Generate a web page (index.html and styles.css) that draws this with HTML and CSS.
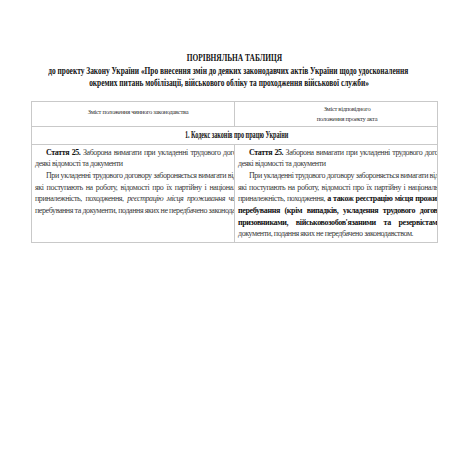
FILE: index.html
```html
<!DOCTYPE html>
<html lang="uk">
<head>
<meta charset="utf-8">
<link rel="stylesheet" href="styles.css">
</head>
<body>
<div class="page">
  <div class="title">
    <div class="tl1">ПОРІВНЯЛЬНА ТАБЛИЦЯ</div>
    <div class="tl2">до проекту Закону України «Про внесення змін до деяких законодавчих актів України щодо удосконалення</div>
    <div class="tl3">окремих питань мобілізації, військового обліку та проходження військової служби»</div>
  </div>
  <table class="cmp">
    <colgroup><col class="c1"><col class="c2"></colgroup>
    <tr class="head">
      <td><div class="hc hl">Зміст положення чинного законодавства</div></td>
      <td><div class="hc hr">Зміст відповідного<br>положення проекту акта</div></td>
    </tr>
    <tr class="sec">
      <td colspan="2"><div class="st"><span>1. Кодекс законів про працю України</span></div></td>
    </tr>
    <tr class="body">
      <td>
        <div class="txt">
          <div class="ln ind l1"><b>Стаття 25.</b> Заборона вимагати при укладенні трудового договору</div>
          <div class="ln">деякі відомості та документи</div>
          <div class="ln ind l3">При укладенні трудового договору забороняється вимагати від осіб,</div>
          <div class="ln l4">які поступають на роботу, відомості про їх партійну і національну</div>
          <div class="ln l5">приналежність, походження, <i>реєстрацію місця проживання чи</i></div>
          <div class="ln l6">перебування та документи, подання яких не передбачено законодавством.</div>
        </div>
      </td>
      <td>
        <div class="txt">
          <div class="ln ind r1"><b>Стаття 25.</b> Заборона вимагати при укладенні трудового договору</div>
          <div class="ln">деякі відомості та документи</div>
          <div class="ln ind r3">При укладенні трудового договору забороняється вимагати від осіб,</div>
          <div class="ln r4">які поступають на роботу, відомості про їх партійну і національну</div>
          <div class="ln r5">приналежність, походження, <b class="sp">а також реєстрацію місця проживання чи</b></div>
          <div class="ln r6"><b class="sp">перебування (крім випадків, укладення трудового договору з</b></div>
          <div class="ln r7"><b class="sp">призовниками, військовозобов'язаними та резервістами)</b> і</div>
          <div class="ln">документи, подання яких не передбачено законодавством.</div>
        </div>
      </td>
    </tr>
  </table>
</div>
</body>
</html>
```

FILE: styles.css
```css
html, body {
  margin: 0;
  padding: 0;
  background: #fff;
}
body {
  font-family: "Liberation Serif", "Times New Roman", serif;
  color: #222;
}
.page {
  padding-top: 52px;
}
.title {
  display: flex;
  flex-direction: column;
  align-items: center;
  font-weight: bold;
  font-size: 10px;
  line-height: 12.5px;
  color: #111;
}
.title > div {
  white-space: nowrap;
  transform: scaleX(0.74);
}
.tl1 { margin-left: 16px; transform: scaleX(0.72); }
.tl2 { margin-left: 4px; }
.tl3 { margin-left: 6px; }
.cmp {
  margin-top: 11px;
  margin-left: 31px;
  width: 406px;
  table-layout: fixed;
  border-collapse: collapse;
}
.cmp td {
  border: 1px solid #c9c9c9;
  padding: 0;
  overflow: hidden;
  vertical-align: top;
}
.c1 { width: 203px; }
.c2 { width: 203px; }
.head td {
  height: 24px;
  vertical-align: middle;
}
.hc {
  text-align: center;
  font-size: 6.5px;
  line-height: 10px;
  letter-spacing: -0.3px;
  color: #333;
}
.hl { padding: 0 0 3px 10px; }
.hr { padding-left: 22px; }
.sec td {
  height: 17px;
  vertical-align: middle;
}
.st {
  display: flex;
  justify-content: center;
  padding-left: 4px;
  font-weight: bold;
  font-size: 9.5px;
  color: #111;
}
.st span {
  white-space: nowrap;
  transform: scaleX(0.65);
}
.body td { height: 97px; }
.txt {
  padding: 2px 0 0 3px;
  font-size: 8px;
  line-height: 11.7px;
  letter-spacing: -0.42px;
  color: #383838;
}
.ln {
  white-space: nowrap;
  height: 11.7px;
}
.ind { text-indent: 11px; }
.l1 { word-spacing: 1px; }
.l3 { word-spacing: 0.2px; }
.l4 { word-spacing: 1.5px; }
.l5 { word-spacing: 2px; }
.l6 { word-spacing: 0; }
.r1 { word-spacing: 0.8px; }
.r3 { word-spacing: 0; }
.r4 { word-spacing: 1px; }
.r5 { word-spacing: 0.5px; }
.r6 { word-spacing: 3px; }
.r7 { word-spacing: 6px; }
.txt b { color: #111; }
.txt b.sp { letter-spacing: -0.35px; }
```
